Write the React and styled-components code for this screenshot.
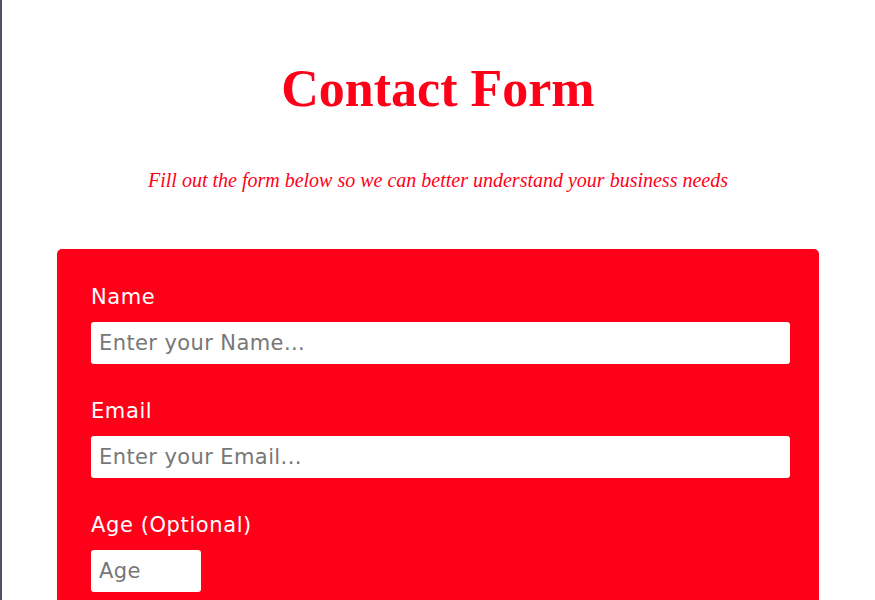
import styled, { createGlobalStyle } from "styled-components"

const GlobalStyle = createGlobalStyle`
  html, body {
    margin: 0;
    padding: 0;
    background: #fff;
  }
  body {
    border-left: 2px solid #4c5068;
    min-height: 600px;
    box-sizing: border-box;
  }
`

const Page = styled.main`
  padding: 53px 56px 40px 55px;
`

const Header = styled.header`
  text-align: center;
  color: #ff0019;
  font-family: "Liberation Serif", serif;
  h1 {
    margin: 0;
    font-size: 52px;
    line-height: 72px;
    font-weight: 700;
  }
  p {
    margin: 41px 0 0;
    font-style: italic;
    font-size: 20px;
    line-height: 28px;
  }
`

const Card = styled.form`
  margin-top: 55px;
  background: #ff0019;
  border-radius: 5px;
  padding: 35px 29px 40px 34px;
  display: flex;
  flex-direction: column;
  gap: 34px;
`

const Field = styled.div`
  display: flex;
  flex-direction: column;
  gap: 12px;
`

const Label = styled.label`
  color: #fff;
  font-family: "DejaVu Sans", sans-serif;
  font-size: 21px;
  letter-spacing: 0.6px;
  line-height: 26px;
`

const Input = styled.input`
  box-sizing: border-box;
  width: ${(p) => p.$width || "100%"};
  height: 42px;
  border: none;
  border-radius: 3px;
  padding: 0 8px;
  background: #fff;
  font-family: "DejaVu Sans", sans-serif;
  font-size: 21px;
  letter-spacing: 0.4px;
  color: #333;
  outline: none;
  &::placeholder {
    color: #777;
  }
`

export default function App() {
  return (
    <>
      <GlobalStyle />
      <Page>
        <Header>
          <h1>Contact Form</h1>
          <p>Fill out the form below so we can better understand your business needs</p>
        </Header>
        <Card onSubmit={(e) => e.preventDefault()}>
          <Field>
            <Label htmlFor="name">Name</Label>
            <Input id="name" placeholder="Enter your Name..." />
          </Field>
          <Field>
            <Label htmlFor="email">Email</Label>
            <Input id="email" type="email" placeholder="Enter your Email..." />
          </Field>
          <Field>
            <Label htmlFor="age">Age (Optional)</Label>
            <Input id="age" type="number" placeholder="Age" $width="110px" />
          </Field>
        </Card>
      </Page>
    </>
  )
}
